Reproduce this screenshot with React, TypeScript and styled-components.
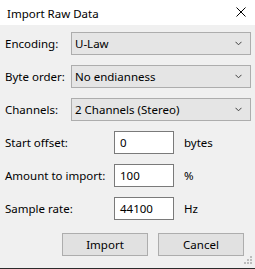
import styled, { createGlobalStyle } from 'styled-components';

const GlobalStyle = createGlobalStyle`
  html, body {
    margin: 0;
    padding: 0;
    background: #f0f0f0;
  }
`;

type ComboField = { label: string; value: string };
type NumberField = { label: string; value: string; unit: string };

const combos: ComboField[] = [
  { label: 'Encoding:', value: 'U-Law' },
  { label: 'Byte order:', value: 'No endianness' },
  { label: 'Channels:', value: '2 Channels (Stereo)' },
];

const numbers: NumberField[] = [
  { label: 'Start offset:', value: '0', unit: 'bytes' },
  { label: 'Amount to import:', value: '100', unit: '%' },
  { label: 'Sample rate:', value: '44100', unit: 'Hz' },
];

const Chevron = () => (
  <svg width="7" height="5" viewBox="0 0 7 5">
    <polyline points="0.5,0.8 3.5,3.8 6.5,0.8" fill="none" stroke="#404040" strokeWidth="1" />
  </svg>
);

const CloseIcon = () => (
  <svg width="10" height="10" viewBox="0 0 10 10">
    <path d="M0.5 0.5 L9.5 9.5 M9.5 0.5 L0.5 9.5" stroke="#000" strokeWidth="1" />
  </svg>
);

const Grip = () => (
  <svg width="9" height="9" viewBox="0 0 9 9">
    <rect x="6" y="0" width="2" height="2" fill="#bcbcbc" />
    <rect x="3" y="3" width="2" height="2" fill="#bcbcbc" />
    <rect x="6" y="3" width="2" height="2" fill="#bcbcbc" />
    <rect x="0" y="6" width="2" height="2" fill="#bcbcbc" />
    <rect x="3" y="6" width="2" height="2" fill="#bcbcbc" />
    <rect x="6" y="6" width="2" height="2" fill="#bcbcbc" />
  </svg>
);

export default function App() {
  return (
    <>
      <GlobalStyle />
      <S.Dialog>
        <S.TitleBar>
          <S.Title>Import Raw Data</S.Title>
          <S.CloseButton>
            <CloseIcon />
          </S.CloseButton>
        </S.TitleBar>
        <S.Body>
          <S.Fields>
            {combos.map((c) => (
              <S.Row key={c.label}>
                <S.Label $width={66}>{c.label}</S.Label>
                <S.Combo>
                  <span>{c.value}</span>
                  <S.ChevronBox>
                    <Chevron />
                  </S.ChevronBox>
                </S.Combo>
              </S.Row>
            ))}
            {numbers.map((n) => (
              <S.Row key={n.label}>
                <S.Label $width={109}>{n.label}</S.Label>
                <S.TextBox>{n.value}</S.TextBox>
                <S.Unit>{n.unit}</S.Unit>
              </S.Row>
            ))}
          </S.Fields>
          <S.Buttons>
            <S.Button>Import</S.Button>
            <S.Button>Cancel</S.Button>
          </S.Buttons>
        </S.Body>
        <S.GripBox>
          <Grip />
        </S.GripBox>
      </S.Dialog>
    </>
  );
}

const S = {
  Dialog: styled.div`
    position: relative;
    box-sizing: border-box;
    width: 255px;
    height: 269px;
    display: flex;
    flex-direction: column;
    background: #f0f0f0;
    border-bottom: 1px solid #2b2b2b;
    font-family: 'Noto Sans', 'Liberation Sans', sans-serif;
    font-size: 11.5px;
    color: #000;
  `,
  TitleBar: styled.div`
    height: 25px;
    flex: none;
    display: flex;
    align-items: center;
    justify-content: space-between;
    background: #fff;
    padding: 0 9px 0 7px;
  `,
  Title: styled.div`
    font-size: 11.5px;
    line-height: 1;
    padding-top: 2px;
  `,
  CloseButton: styled.div`
    display: flex;
    width: 10px;
    height: 10px;
    margin-top: -1px;
  `,
  Body: styled.div`
    flex: 1;
    display: flex;
    flex-direction: column;
    padding: 7px 4px 0 5px;
  `,
  Fields: styled.div`
    display: flex;
    flex-direction: column;
    gap: 10px;
  `,
  Row: styled.div`
    display: flex;
    align-items: center;
    height: 23px;
  `,
  Label: styled.div<{ $width: number }>`
    width: ${({ $width }) => $width}px;
    flex: none;
    white-space: nowrap;
  `,
  Combo: styled.div`
    box-sizing: border-box;
    width: 180px;
    height: 23px;
    display: flex;
    align-items: center;
    justify-content: space-between;
    padding: 0 8px 0 3px;
    background: #e5e5e5;
    border: 1px solid #adadad;
  `,
  ChevronBox: styled.div`
    display: flex;
  `,
  TextBox: styled.div`
    box-sizing: border-box;
    width: 60px;
    height: 23px;
    display: flex;
    align-items: center;
    padding-left: 5px;
    background: #fff;
    border: 1px solid #7a7a7a;
  `,
  Unit: styled.div`
    margin-left: 10px;
  `,
  Buttons: styled.div`
    display: flex;
    justify-content: flex-end;
    gap: 10px;
    margin-top: 13px;
    padding-right: 7px;
  `,
  Button: styled.div`
    box-sizing: border-box;
    width: 86px;
    height: 23px;
    display: flex;
    align-items: center;
    justify-content: center;
    background: #e1e1e1;
    border: 1px solid #adadad;
  `,
  GripBox: styled.div`
    position: absolute;
    right: 2px;
    bottom: 3px;
    display: flex;
  `,
};
